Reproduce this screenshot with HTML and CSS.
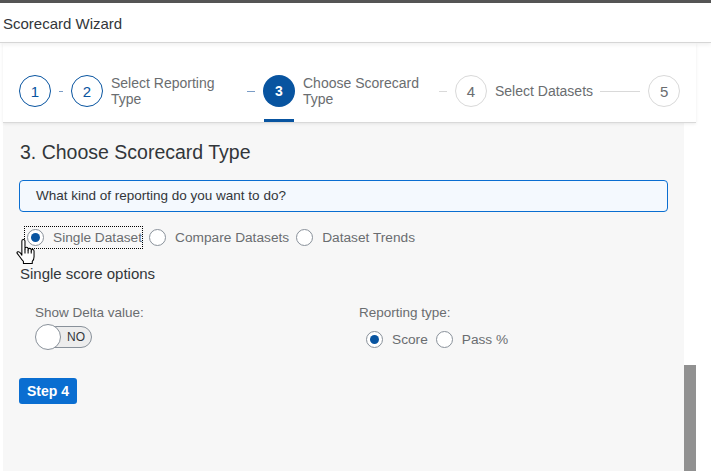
FILE: index.html
```html
<!DOCTYPE html>
<html>
<head>
<meta charset="utf-8">
<link rel="stylesheet" href="styles.css">
</head>
<body>
<div class="topbar"></div>
<div class="header">Scorecard Wizard</div>
<div class="wizard">
  <div class="stepper">
    <div class="circle done">1</div>
    <div class="conn conn-short blue"></div>
    <div class="circle done">2</div>
    <div class="label label-2">Select Reporting Type</div>
    <div class="conn conn-mid blue"></div>
    <div class="step-current">
      <div class="circle current">3</div>
    </div>
    <div class="label label-3">Choose Scorecard Type</div>
    <div class="conn conn-mid gray"></div>
    <div class="circle todo">4</div>
    <div class="label label-auto">Select Datasets</div>
    <div class="conn conn-long gray"></div>
    <div class="circle todo">5</div>
  </div>
  <div class="body-row">
    <div class="panel">
      <h2 class="title">3. Choose Scorecard Type</h2>
      <div class="question">What kind of reporting do you want to do?</div>
      <div class="radio-row">
        <div class="radio-item focused">
          <span class="radio checked"></span><span class="rlabel">Single Dataset</span>
        </div>
        <div class="radio-item">
          <span class="radio"></span><span class="rlabel">Compare Datasets</span>
        </div>
        <div class="radio-item">
          <span class="radio"></span><span class="rlabel">Dataset Trends</span>
        </div>
        <svg class="cursor" width="19" height="25" viewBox="0 0 18 24">
          <path d="M5.5 2 Q5.5 0.5 7 0.5 Q8.5 0.5 8.5 2 V9.5 Q8.5 8 10 8 Q11.5 8 11.5 9.5 V10.5 Q11.5 9 13 9 Q14.5 9 14.5 10.5 V11.5 Q14.5 10 15.8 10 Q17.2 10 17.2 11.5 V17 Q17.2 20 15.5 21.5 V23.5 H7 V21.5 Q5.5 20 3.5 17 L1 13.8 Q0.4 12.6 1.8 12.2 Q3 11.9 4.2 13.5 L5.5 15.5 Z" fill="#fff" stroke="#000" stroke-width="1" stroke-linejoin="round"/>
          <path d="M8.5 9.5 V14 M11.5 10.5 V14 M14.5 11.5 V14" stroke="#000" stroke-width="1" fill="none"/>
        </svg>
      </div>
      <div class="subtitle">Single score options</div>
      <div class="options">
        <div class="opt-col">
          <div class="opt-label">Show Delta value:</div>
          <div class="switch">
            <span class="knob"></span>
            <span class="track">NO</span>
          </div>
        </div>
        <div class="opt-col">
          <div class="opt-label">Reporting type:</div>
          <div class="radio-row small">
            <div class="radio-item"><span class="radio checked"></span><span class="rlabel">Score</span></div>
            <div class="radio-item"><span class="radio"></span><span class="rlabel">Pass %</span></div>
          </div>
        </div>
      </div>
      <button class="btn">Step 4</button>
    </div>
    <div class="scrolltrack"><div class="thumb"></div></div>
  </div>
</div>
</body>
</html>
```

FILE: styles.css
```css
html, body {
  margin: 0;
  padding: 0;
  background: #ffffff;
  height: 471px;
  overflow: hidden;
  font-family: "Liberation Sans", Arial, sans-serif;
  color: #32363a;
}
.topbar {
  height: 3px;
  background: #555555;
}
.header {
  height: 40px;
  box-sizing: border-box;
  padding-left: 3px;
  line-height: 41px;
  font-size: 15px;
  color: #32363a;
  border-bottom: 1px solid #d6d6d6;
  box-shadow: 0 2px 4px rgba(0,0,0,0.06);
  position: relative;
  z-index: 2;
}
.wizard {
  margin-left: 3px;
  width: 693px;
}
.stepper {
  height: 80px;
  box-sizing: border-box;
  padding: 32px 0 0 16px;
  display: flex;
  align-items: flex-start;
  border-bottom: 1px solid #d9d9d9;
  box-shadow: 0 1px 3px rgba(0,0,0,0.08);
  position: relative;
  z-index: 1;
}
.circle {
  width: 32px;
  height: 32px;
  box-sizing: border-box;
  border-radius: 50%;
  display: flex;
  align-items: center;
  justify-content: center;
  font-size: 15px;
  flex: none;
}
.circle.done {
  border: 1px solid #0854a0;
  color: #0854a0;
}
.circle.current {
  background: #0854a0;
  color: #ffffff;
  font-weight: bold;
  font-size: 14px;
}
.circle.todo {
  border: 1px solid #d9d9d9;
  color: #6a6d70;
}
.step-current {
  position: relative;
  height: 47px;
}
.step-current::after {
  content: "";
  position: absolute;
  left: 1px;
  right: 1px;
  bottom: 0;
  height: 3px;
  background: #0854a0;
}
.conn {
  height: 1px;
  margin-top: 16px;
  flex: none;
}
.conn.blue { background: #7a9cc6; }
.conn.gray { background: #d9d9d9; }
.conn-short { width: 4px; margin-left: 8px; margin-right: 8px; }
.conn-mid { width: 8px; margin-right: 8px; }
.conn-long { width: 40px; margin-left: 7px; margin-right: 8px; }
.label {
  margin-left: 8px;
  font-size: 14px;
  line-height: 16px;
  color: #6a6d70;
  flex: none;
}
.label-2 {
  width: 108px;
  margin-right: 28px;
}
.label-3 {
  width: 128px;
  margin-right: 8px;
}
.label-auto {
  line-height: 32px;
}
.body-row {
  display: flex;
  height: 348px;
}
.panel {
  width: 681px;
  background: #f7f7f7;
  box-sizing: border-box;
  padding: 0 16px 0 16px;
  flex: none;
}
.title {
  margin: 16px 0 0 1px;
  font-size: 19.5px;
  font-weight: normal;
  line-height: 26px;
  color: #32363a;
}
.question {
  margin-top: 15px;
  height: 32px;
  box-sizing: border-box;
  border: 1px solid #0a6ed1;
  border-radius: 4px;
  background: #f4f9fe;
  padding-left: 16px;
  line-height: 30px;
  font-size: 13.5px;
  color: #32363a;
}
.radio-row {
  display: flex;
  align-items: center;
  margin-top: 14px;
  position: relative;
}
.radio-item {
  display: flex;
  align-items: center;
  height: 23px;
  box-sizing: border-box;
  border: 1px dotted transparent;
  padding: 0 0 0 2px;
  margin-right: 3px;
}
.radio-item.focused {
  border-color: #000;
  margin-left: 5px;
}
.radio {
  width: 17px;
  height: 17px;
  box-sizing: border-box;
  border: 1px solid #89919a;
  border-radius: 50%;
  background: #fff;
  display: flex;
  align-items: center;
  justify-content: center;
  flex: none;
}
.radio.checked::after {
  content: "";
  width: 9px;
  height: 9px;
  border-radius: 50%;
  background: #0854a0;
}
.rlabel {
  margin-left: 9px;
  font-size: 13.7px;
  color: #6a6d70;
}
.cursor {
  position: absolute;
  left: -3px;
  top: 13px;
}
.subtitle {
  margin: 16px 0 0 1px;
  font-size: 15px;
  color: #32363a;
}
.options {
  display: grid;
  grid-template-columns: 324px 324px;
  margin-top: 22px;
}
.opt-col {
  padding-left: 16px;
}
.opt-label {
  font-size: 13.5px;
  color: #6a6d70;
  line-height: 18px;
}
.switch {
  margin-top: 2px;
  display: flex;
  align-items: center;
  height: 26px;
  width: 58px;
}
.knob {
  width: 26px;
  height: 26px;
  box-sizing: border-box;
  border-radius: 50%;
  background: #fff;
  border: 1px solid #89919a;
  position: relative;
  z-index: 1;
  flex: none;
}
.track {
  margin-left: -21px;
  width: 52px;
  height: 22px;
  box-sizing: border-box;
  border: 1px solid #89919a;
  border-radius: 11px;
  background: #ededed;
  display: flex;
  align-items: center;
  padding-left: 26px;
  font-size: 12px;
  color: #32363a;
}
.radio-row.small {
  margin-top: 6px;
}
.radio-row.small .radio-item {
  padding-left: 6px;
  margin-right: 0;
}
.btn {
  margin-top: 27px;
  display: block;
  height: 26px;
  padding: 0 8px;
  border: none;
  border-radius: 3px;
  background: #0a6ed1;
  color: #fff;
  font-family: "Liberation Sans", Arial, sans-serif;
  font-weight: bold;
  font-size: 14px;
}
.scrolltrack {
  width: 12px;
  flex: none;
}
.thumb {
  margin-top: 242px;
  height: 110px;
  background: #919191;
}
```
